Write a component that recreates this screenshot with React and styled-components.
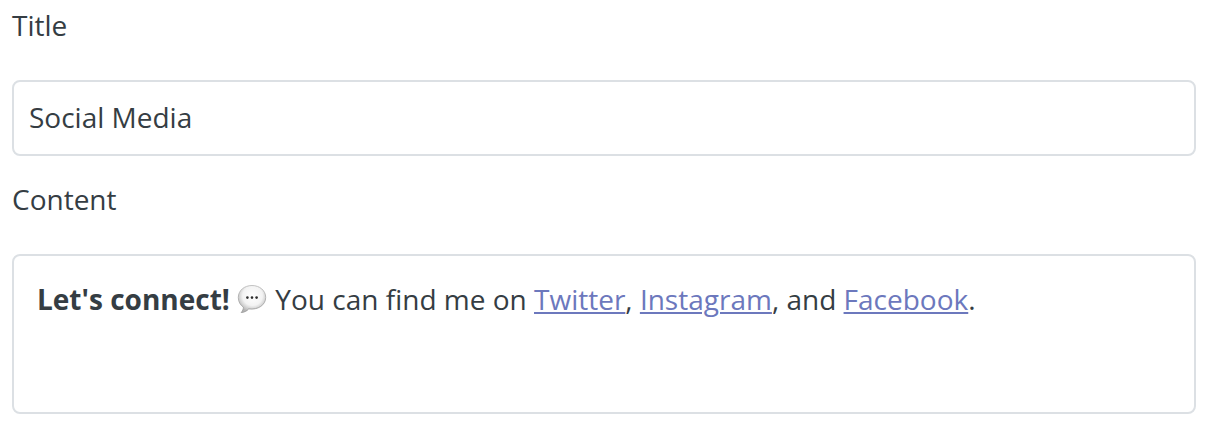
import React, { useState } from 'react';
import styled, { createGlobalStyle } from 'styled-components';

const GlobalStyle = createGlobalStyle`
  body {
    margin: 0;
    background: #fff;
    color: #353d43;
    font-family: "Open Sans", "Noto Sans", sans-serif;
    font-size: 28px;
    line-height: 42px;
  }
  * {
    box-sizing: border-box;
  }
`;

const Form = styled.form`
  display: flex;
  flex-direction: column;
  gap: 22px;
  padding: 4px 12px 10px;
`;

const Field = styled.div`
  display: flex;
  flex-direction: column;
  align-items: stretch;
  gap: 34px;
`;

const Label = styled.label`
  align-self: flex-start;
`;

const TextInput = styled.input`
  width: 100%;
  padding: 14px 15px 16px;
  border: 2px solid #dce0e4;
  border-radius: 8px;
  background: #fff;
  color: inherit;
  font: inherit;
  outline: none;
`;

const Editor = styled.div`
  min-height: 160px;
  padding: 22px 23px;
  border: 2px solid #dce0e4;
  border-radius: 8px;
  outline: none;
`;

const Paragraph = styled.p`
  margin: 0;
`;

const Link = styled.a`
  color: #6c78bd;
  text-decoration: underline;
  text-decoration-thickness: 2px;
  text-underline-offset: 2px;
`;

const Bubble = styled.svg`
  width: 30px;
  height: 30px;
  margin-right: 1px;
  vertical-align: -4px;
`;

function SpeechBubble() {
  return (
    <Bubble viewBox="0 0 30 30" role="img" aria-label="Speech balloon">
      <defs>
        <radialGradient id="bubble-fill" cx="52%" cy="38%" r="60%">
          <stop offset="0" stopColor="#fff" />
          <stop offset="0.6" stopColor="#f3f3f3" />
          <stop offset="1" stopColor="#b4b4b4" />
        </radialGradient>
        <linearGradient id="bubble-edge" x1="0" y1="0" x2="0" y2="1">
          <stop offset="0" stopColor="#bdbdbd" />
          <stop offset="1" stopColor="#9a9a9a" />
        </linearGradient>
      </defs>
      <path
        d="M15 1.500C7.300 1.500 1.300 6.500 1.300 13.500c0 4.200 2 7.600 5.100 9.600 0 2.100-.7 3.900-2.200 5.400 3.200-.2 5.800-1.500 7.500-3.600 9.300 1.200 17-3.900 17-11.400C28.700 6.500 22.700 1.500 15 1.500z"
        fill="url(#bubble-fill)"
        stroke="url(#bubble-edge)"
        strokeWidth="0.9"
      />
      <circle cx="10.4" cy="13.6" r="1.3" fill="#2e2e2e" />
      <circle cx="15" cy="13.6" r="1.3" fill="#2e2e2e" />
      <circle cx="19.6" cy="13.6" r="1.3" fill="#2e2e2e" />
    </Bubble>
  );
}

function App() {
  const [title, setTitle] = useState('Social Media');

  return (
    <>
      <GlobalStyle />
      <Form>
        <Field>
          <Label htmlFor="title">Title</Label>
          <TextInput id="title" type="text" value={title} onChange={(e) => setTitle(e.target.value)} />
        </Field>
        <Field>
          <Label as="span" id="content-label">Content</Label>
          <Editor
            role="textbox"
            aria-multiline="true"
            aria-labelledby="content-label"
            contentEditable
            suppressContentEditableWarning
            spellCheck={false}
          >
            <Paragraph>
              <strong>Let's connect!</strong> <SpeechBubble /> You can find me on{' '}
              <Link href="https://twitter.com">Twitter</Link>,{' '}
              <Link href="https://instagram.com">Instagram</Link>, and{' '}
              <Link href="https://facebook.com">Facebook</Link>.
            </Paragraph>
          </Editor>
        </Field>
      </Form>
    </>
  );
}

export default App;
